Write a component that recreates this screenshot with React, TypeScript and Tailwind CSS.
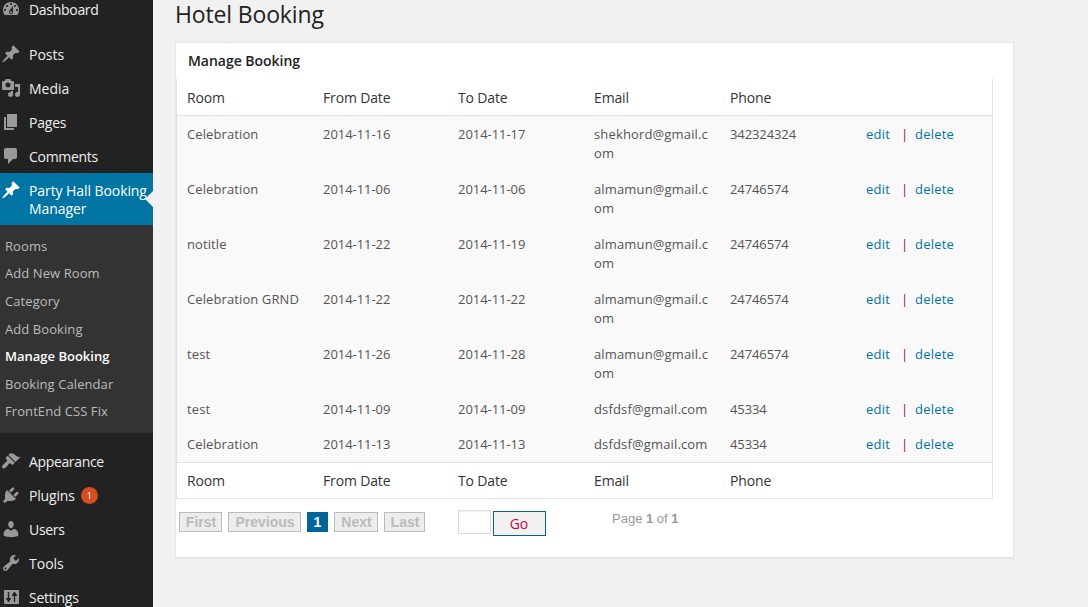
import React from "react";

const icons = {
  dashboard:
    "M3.76 16h12.48c1.1-1.37 1.76-3.11 1.76-5 0-4.42-3.58-8-8-8s-8 3.58-8 8c0 1.89.66 3.63 1.76 5zM10 4c.55 0 1 .45 1 1s-.45 1-1 1-1-.45-1-1 .45-1 1-1zM6 6c.55 0 1 .45 1 1s-.45 1-1 1-1-.45-1-1 .45-1 1-1zm8 0c.55 0 1 .45 1 1s-.45 1-1 1-1-.45-1-1 .45-1 1-1zm-5.37 5.55L12 7v6c0 1.1-.9 2-2 2s-2-.9-2-2c0-.57.24-1.08.63-1.45zM4 10c.55 0 1 .45 1 1s-.45 1-1 1-1-.45-1-1 .45-1 1-1zm12 0c.55 0 1 .45 1 1s-.45 1-1 1-1-.45-1-1 .45-1 1-1zm-5 3c0-.55-.45-1-1-1s-1 .45-1 1 .45 1 1 1 1-.45 1-1z",
  pin: "M10.44 3.02l1.82-1.82 6.36 6.35-1.83 1.82c-1.05-.68-2.48-.57-3.41.36l-.75.75c-.92.93-1.04 2.35-.35 3.41l-1.83 1.82-2.41-2.41-2.8 2.79c-.42.42-3.38 2.71-3.8 2.29s1.86-3.39 2.28-3.81l2.79-2.79L4.1 9.36l1.83-1.82c1.05.69 2.48.57 3.4-.36l.75-.75c.93-.92 1.05-2.35.36-3.41z",
  media:
    "M13 11V4c0-.55-.45-1-1-1h-1.67L9 1H5L3.67 3H2c-.55 0-1 .45-1 1v7c0 .55.45 1 1 1h10c.55 0 1-.45 1-1zM7 4.5c1.38 0 2.5 1.12 2.5 2.5S8.38 9.5 7 9.5 4.5 8.38 4.5 7 5.62 4.5 7 4.5zM14 6h5v10.500c0 1.38-1.12 2.5-2.5 2.5S14 17.88 14 16.5s1.12-2.5 2.5-2.5c.17 0 .34.02.5.05V9h-3V6zm-4 8.05V13h2v3.5c0 1.38-1.12 2.5-2.5 2.5S7 17.88 7 16.5 8.12 14 9.5 14c.17 0 .34.02.5.05z",
  pages: "M6 15V2h10v13H6zm-1 1h8v2H3V5h2v11z",
  comments:
    "M5 2h9c1.1 0 2 .9 2 2v7c0 1.1-.9 2-2 2h-2l-5 5v-5H5c-1.1 0-2-.9-2-2V4c0-1.1.9-2 2-2z",
  appearance:
    "M14.48 11.06L7.41 3.99l1.5-1.5c.5-.56 2.3-.47 3.51.32 1.21.8 1.43 1.28 2.91 2.1 1.18.64 2.45 1.26 4.45.85zm-.71.71L6.7 4.7 4.93 6.47c-.39.39-.39 1.02 0 1.41l1.06 1.06c.39.39.39 1.03 0 1.42-.6.6-1.43 1.11-2.21 1.69-.35.26-.7.53-1.01.84C1.43 14.23.4 16.08 1.4 17.07c.99 1 2.84-.03 4.18-1.36.31-.31.58-.66.85-1.02.57-.78 1.08-1.61 1.69-2.21.39-.39 1.02-.39 1.41 0l1.06 1.06c.39.39 1.02.39 1.41 0z",
  plugins:
    "M13.11 4.36L9.87 7.6 8 5.73l3.24-3.24c.35-.34 1.05-.2 1.56.32.52.51.66 1.21.31 1.55zm-8 1.77l.91-1.12 9.01 9.01-1.19.84c-.71.71-2.63 1.16-3.82 1.16H6.14L4.9 17.26c-.59.59-1.54.59-2.12 0-.59-.58-.59-1.53 0-2.12l1.24-1.24v-3.88c0-1.13.4-3.19 1.09-3.89zm7.26 3.97l3.24-3.24c.34-.35 1.04-.21 1.55.31.52.51.66 1.21.31 1.55l-3.24 3.25z",
  users:
    "M10 9.25c-2.27 0-2.73-3.44-2.73-3.44C7 4.02 7.82 2 9.97 2c2.16 0 2.98 2.02 2.71 3.81 0 0-.41 3.44-2.68 3.44zm0 2.57L12.72 10c2.39 0 4.52 2.33 4.52 4.53v2.49s-3.65 1.13-7.24 1.13c-3.65 0-7.24-1.13-7.24-1.13v-2.49c0-2.25 1.94-4.48 4.47-4.48z",
  tools:
    "M16.68 9.77c-1.34 1.34-3.3 1.67-4.95.99l-5.41 6.52c-.99.99-2.59.99-3.58 0s-.99-2.59 0-3.57l6.52-5.42c-.68-1.65-.35-3.61.99-4.95 1.28-1.28 3.12-1.62 4.72-1.06l-2.89 2.89 2.82 2.82 2.86-2.87c.53 1.58.18 3.39-1.08 4.65zM3.81 16.21c.4.39 1.04.39 1.43 0 .4-.4.4-1.04 0-1.43-.39-.4-1.03-.4-1.43 0-.39.39-.39 1.03 0 1.43z",
  settings:
    "M18 16V4c0-.55-.45-1-1-1H4c-.55 0-1 .45-1 1v12c0 .55.45 1 1 1h13c.55 0 1-.45 1-1zM8.200 11H10v1l-1.800 2V15H6.800v-1L5 12v-1h1.800V5h1.400zM12.800 9H11V8l1.800-2.500V5h1.400v.5L16 8v1h-1.800v6h-1.400z",
};

type IconName = keyof typeof icons;

function MenuItem({
  icon,
  label,
  active = false,
  badge,
  tracking = "tracking-normal",
}: {
  icon: IconName;
  label: string;
  active?: boolean;
  badge?: string;
  tracking?: string;
}) {
  return (
    <a
      className={
        active
          ? "relative flex h-[52px] shrink-0 bg-[#0074a2] pt-2 pl-px text-white"
          : "relative flex h-[34px] shrink-0 pt-2 pl-px text-[#eee]"
      }
    >
      <svg
        viewBox="0 0 20 20"
        fillRule="evenodd"
        className={active ? "-mt-px size-5 shrink-0 fill-white" : "-mt-px size-5 shrink-0 fill-[#999]"}
      >
        <path d={icons[icon]} />
      </svg>
      <span className={`ml-2 w-[124px] pt-px text-[14px] leading-[18px] ${tracking}`}>
        {label}
        {badge && (
          <span className="ml-[6px] inline-block h-[17px] w-[17px] rounded-full bg-[#d54e21] text-center align-top text-[9px] leading-[17px] text-white">
            {badge}
          </span>
        )}
      </span>
      {active && (
        <span className="absolute top-[18px] right-0 h-0 w-0 border-y-8 border-r-8 border-y-transparent border-r-[#f1f1f1]" />
      )}
    </a>
  );
}

const submenu = [
  "Rooms",
  "Add New Room",
  "Category",
  "Add Booking",
  "Manage Booking",
  "Booking Calendar",
  "FrontEnd CSS Fix",
];

const headings = ["Room", "From Date", "To Date", "Email", "Phone", ""];

const bookings = [
  ["Celebration", "2014-11-16", "2014-11-17", "shekhord@gmail.com", "342324324"],
  ["Celebration", "2014-11-06", "2014-11-06", "almamun@gmail.com", "24746574"],
  ["notitle", "2014-11-22", "2014-11-19", "almamun@gmail.com", "24746574"],
  ["Celebration GRND", "2014-11-22", "2014-11-22", "almamun@gmail.com", "24746574"],
  ["test", "2014-11-26", "2014-11-28", "almamun@gmail.com", "24746574"],
  ["test", "2014-11-09", "2014-11-09", "dsfdsf@gmail.com", "45334"],
  ["Celebration", "2014-11-13", "2014-11-13", "dsfdsf@gmail.com", "45334"],
];

// Letter spacing of each body column.
const cellTracking = [
  "tracking-[0.1px]",
  "tracking-[-0.05px]",
  "tracking-[-0.05px]",
  "tracking-[0.15px]",
  "tracking-[-0.1px]",
];

function HeadingRow({ height }: { height: string }) {
  return (
    <div
      className={`${height} grid grid-cols-[136px_135px_136px_136px_136px_136px] text-[14px] leading-[19px] tracking-[-0.15px] text-[#333]`}
    >
      {headings.map((h, i) => (
        <div key={i} className="pl-[10px]">
          {h}
        </div>
      ))}
    </div>
  );
}

function PageButton({ label, width }: { label: string; width: string }) {
  return (
    <button
      className={`${width} h-5 border border-[#bbb] bg-[#ededed] pl-px text-center font-['Liberation_Sans',sans-serif] text-[14px] leading-[18px] font-bold text-[#bbb]`}
    >
      {label}
    </button>
  );
}

export default function App() {
  return (
    <div className="flex h-[607px] w-[1088px] overflow-hidden bg-[#f1f1f1] font-['Open_Sans',sans-serif]">
      <nav className="-mt-2 flex w-[153px] shrink-0 flex-col bg-[#222]">
        <MenuItem icon="dashboard" label="Dashboard" tracking="tracking-[-0.3px]" />
        <div className="h-[11px] shrink-0" />
        <MenuItem icon="pin" label="Posts" />
        <MenuItem icon="media" label="Media" />
        <MenuItem icon="pages" label="Pages" tracking="tracking-[-0.2px]" />
        <MenuItem icon="comments" label="Comments" tracking="tracking-[-0.3px]" />
        <MenuItem icon="pin" label="Party Hall Booking Manager" active tracking="tracking-[-0.08px]" />
        <ul className="h-[208px] shrink-0 bg-[#333] pt-[6.85px] pl-[5px] text-[13px] tracking-[0.08px] text-[#bbb]">
          {submenu.map((s) => (
            <li
              key={s}
              className={
                s === "Manage Booking"
                  ? "h-[27.6px] leading-[28px] font-semibold tracking-normal text-white"
                  : "h-[27.6px] leading-[28px]"
              }
            >
              {s}
            </li>
          ))}
        </ul>
        <div className="h-[11px] shrink-0" />
        <MenuItem icon="appearance" label="Appearance" tracking="tracking-[-0.35px]" />
        <MenuItem icon="plugins" label="Plugins" badge="1" tracking="tracking-[-0.18px]" />
        <MenuItem icon="users" label="Users" tracking="tracking-[-0.3px]" />
        <MenuItem icon="tools" label="Tools" />
        <MenuItem icon="settings" label="Settings" tracking="tracking-[-0.3px]" />
      </nav>

      <main className="pl-[22px]">
        <h1 className="h-[42px] text-[23px] leading-[29px] tracking-[-0.15px] text-[#222]">
          Hotel Booking
        </h1>
        <section className="h-[516px] w-[839px] border border-[#e5e5e5] bg-white shadow-[0_1px_1px_rgba(0,0,0,0.04)]">
          <h2 className="h-9 pl-3 text-[14px] leading-9 font-semibold tracking-[-0.03px] text-[#222]">
            Manage Booking
          </h2>
          <div className="w-[817px] border border-t-0 border-[#e1e1e1]">
            <HeadingRow height="h-9 pt-[9px]" />
            <div className="h-[348px] border-y border-[#e1e1e1] bg-[#f9f9f9] text-[13px] leading-[19px] text-[#555]">
              {bookings.map((row, r) => (
                <div
                  key={r}
                  className={`grid grid-cols-[136px_135px_136px_136px_136px_136px] pt-[9px] ${r < 5 ? "h-[55px]" : "h-[35px]"}`}
                >
                  {row.map((cell, c) => (
                    <div key={c} className={`pr-[10px] pl-[10px] break-all ${cellTracking[c]}`}>
                      {cell}
                    </div>
                  ))}
                  <div className="flex pl-[10px] tracking-[0.2px] text-[#0074a2]">
                    <a className="w-[35px]">edit</a>
                    <span className="w-[14px] text-[#85206b]">|</span>
                    <a>delete</a>
                  </div>
                </div>
              ))}
            </div>
            <HeadingRow height="h-[35px] pt-2" />
          </div>
          <div className="flex pl-[3px]">
            <div className="flex w-[279px] gap-[6px] pt-[13px]">
              <PageButton label="First" width="w-[43px]" />
              <PageButton label="Previous" width="w-[73px]" />
              <span className="h-5 w-[21px] bg-[#069] text-center font-['Liberation_Sans',sans-serif] text-[14px] leading-5 font-bold text-white">
                1
              </span>
              <PageButton label="Next" width="w-[44px]" />
              <PageButton label="Last" width="w-[41px]" />
            </div>
            <div className="flex gap-[2px] pt-[11px]">
              <input className="h-6 w-[33px] border border-[#ddd] bg-white shadow-[inset_0_1px_2px_rgba(0,0,0,0.07)]" />
              <button className="mt-px h-[25px] w-[53px] border border-[#069] bg-[#f1f1f1] pr-px text-[14px] leading-[23px] text-[#c03]">
                Go
              </button>
            </div>
            <p className="pt-[11px] pl-[66px] font-['Liberation_Sans',sans-serif] text-[13px] leading-[17px] text-[#999]">
              Page <b>1</b> of <b>1</b>
            </p>
          </div>
        </section>
      </main>
    </div>
  );
}
